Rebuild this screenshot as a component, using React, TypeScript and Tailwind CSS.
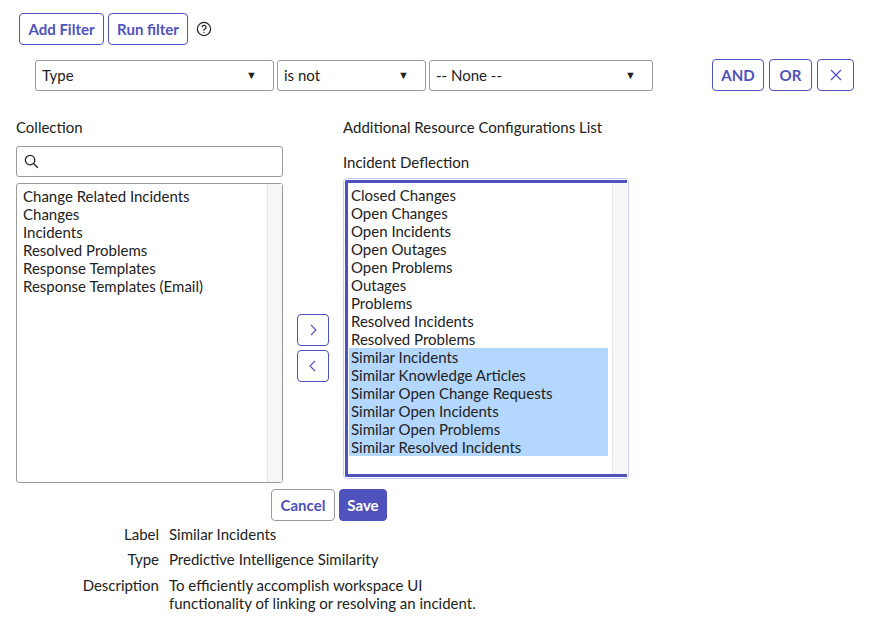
import React from "react";

const ind = "#4f52bd";
const left = ["Change Related Incidents", "Changes", "Incidents", "Resolved Problems", "Response Templates", "Response Templates (Email)"];
const right = [
  "Closed Changes", "Open Changes", "Open Incidents", "Open Outages", "Open Problems", "Outages", "Problems",
  "Resolved Incidents", "Resolved Problems",
];
const sel = [
  "Similar Incidents", "Similar Knowledge Articles", "Similar Open Change Requests", "Similar Open Incidents",
  "Similar Open Problems", "Similar Resolved Incidents",
];

function Caret() {
  return <span className="ml-auto text-[11px] text-[#222]">▼</span>;
}

function Select({ w, text }: { w: string; text: string }) {
  return (
    <div className={`${w} h-[31px] flex items-center px-[6px] pr-[16px] rounded-[3px] border border-[#9a9a9a] text-[15px] text-[#222]`}>
      {text}
      <Caret />
    </div>
  );
}

export default function App() {
  const btn = "h-[32px] rounded-[4px] border border-[#4f52bd] font-bold text-[15px] flex items-center justify-center";
  const outline = `${btn} text-[#4f52bd] bg-white`;
  return (
    <div className="w-[870px] h-[625px] bg-white text-[#222] relative" style={{ fontFamily: "Lato, 'Liberation Sans', sans-serif" }}>
      <div className="flex items-center pt-[13px] pl-[19px] gap-[4px]">
        <div className={`${outline} w-[85px]`}>Add Filter</div>
        <div className={`${outline} w-[80px]`}>Run filter</div>
        <svg width="16" height="16" viewBox="0 0 16 16" className="ml-[4px]">
          <circle cx="8" cy="8" r="6.6" fill="none" stroke="#222" strokeWidth="1.2" />
          <path d="M6 6.3a2 2 0 1 1 2.6 1.9c-.5.2-.6.5-.6 1v.5" fill="none" stroke="#222" strokeWidth="1.2" />
          <circle cx="8" cy="11.4" r=".7" fill="#222" />
        </svg>
      </div>
      <div className="flex items-center mt-[14px] pl-[35px] gap-[3px]">
        <Select w="w-[239px]" text="Type" />
        <Select w="w-[149px]" text="is not" />
        <Select w="w-[224px]" text="-- None --" />
        <div className={`${outline} w-[52px] ml-[56px] h-[31px]`}>AND</div>
        <div className={`${outline} w-[43px] ml-[2px] h-[31px]`}>OR</div>
        <div className={`${outline} w-[37px] ml-[2px] h-[31px] font-normal`}>
          <svg width="12" height="12" viewBox="0 0 12 12"><path d="M1 1l10 10M11 1L1 11" stroke={ind} strokeWidth="1.3" /></svg>
        </div>
      </div>
      <div className="flex mt-[26px] pl-[16px]">
        <div className="w-[267px]">
          <div className="text-[15px] h-[20px] leading-[20px]">Collection</div>
          <div className="mt-[9px] h-[31px] rounded-[3px] border border-[#9a9a9a] flex items-center pl-[7px]">
            <svg width="15" height="15" viewBox="0 0 16 16"><circle cx="6.5" cy="6.5" r="5" fill="none" stroke="#222" strokeWidth="1.4" /><path d="M10.2 10.2l4.5 4.5" stroke="#222" strokeWidth="1.4" /></svg>
          </div>
          <div className="mt-[6px] h-[300px] border border-[#9a9a9a] rounded-[3px] flex">
            <div className="flex-1 pt-[3px] pl-[6px] text-[15px] leading-[18px]">
              {left.map((t) => <div key={t}>{t}</div>)}
            </div>
            <div className="w-[15px] border-l border-[#e5e5e5] bg-[#f6f6f6]" />
          </div>
        </div>
        <div className="w-[60px] flex flex-col items-center justify-center gap-[4px] pt-[96px]">
          {["M6 3l5 5-5 5", "M10 3L5 8l5 5"].map((d) => (
            <div key={d} className="w-[32px] h-[32px] rounded-[4px] border border-[#4f52bd] flex items-center justify-center">
              <svg width="16" height="16" viewBox="0 0 16 16"><path d={d} fill="none" stroke={ind} strokeWidth="1.1" /></svg>
            </div>
          ))}
        </div>
        <div className="w-[286px]">
          <div className="text-[15px] h-[20px] leading-[20px]">Additional Resource Configurations List</div>
          <div className="text-[15px] h-[20px] leading-[20px] mt-[15px]">Incident Deflection</div>
          <div className="mt-[6px] h-[301px] rounded-[4px] border border-[#c9cbee] p-px">
            <div className="h-full flex border-[3px] border-[#4f52bd] border-r-0 rounded-l-[2px]">
              <div className="flex-1 pt-[3px] pl-[1px] pr-[4px] text-[15px] leading-[18px]">
                {right.map((t) => <div key={t} className="pl-[2px]">{t}</div>)}
                {sel.map((t) => <div key={t} className="pl-[2px] bg-[#b3d7ff]">{t}</div>)}
              </div>
              <div className="w-[15px] border-l border-[#e5e5e5] bg-[#f6f6f6]" />
            </div>
          </div>
        </div>
      </div>
      <div className="flex ml-[271px] mt-[6px] gap-[4px]">
        <div className={`${btn} w-[64px] h-[31px] border-[#9a9a9a] text-[#4f52bd] bg-white`}>Cancel</div>
        <div className={`${btn} w-[48px] h-[31px] bg-[#4f52bd] text-white`}>Save</div>
      </div>
      <div className="mt-[4px] text-[15px] leading-[18px] grid grid-cols-[159px_1fr] gap-x-[10px]">
        <div className="text-right">Label</div><div>Similar Incidents</div>
        <div className="text-right mt-[7px]">Type</div><div className="mt-[7px]">Predictive Intelligence Similarity</div>
        <div className="text-right mt-[8px]">Description</div>
        <div className="mt-[8px]">To efficiently accomplish workspace UI<br />functionality of linking or resolving an incident.</div>
      </div>
    </div>
  );
}
